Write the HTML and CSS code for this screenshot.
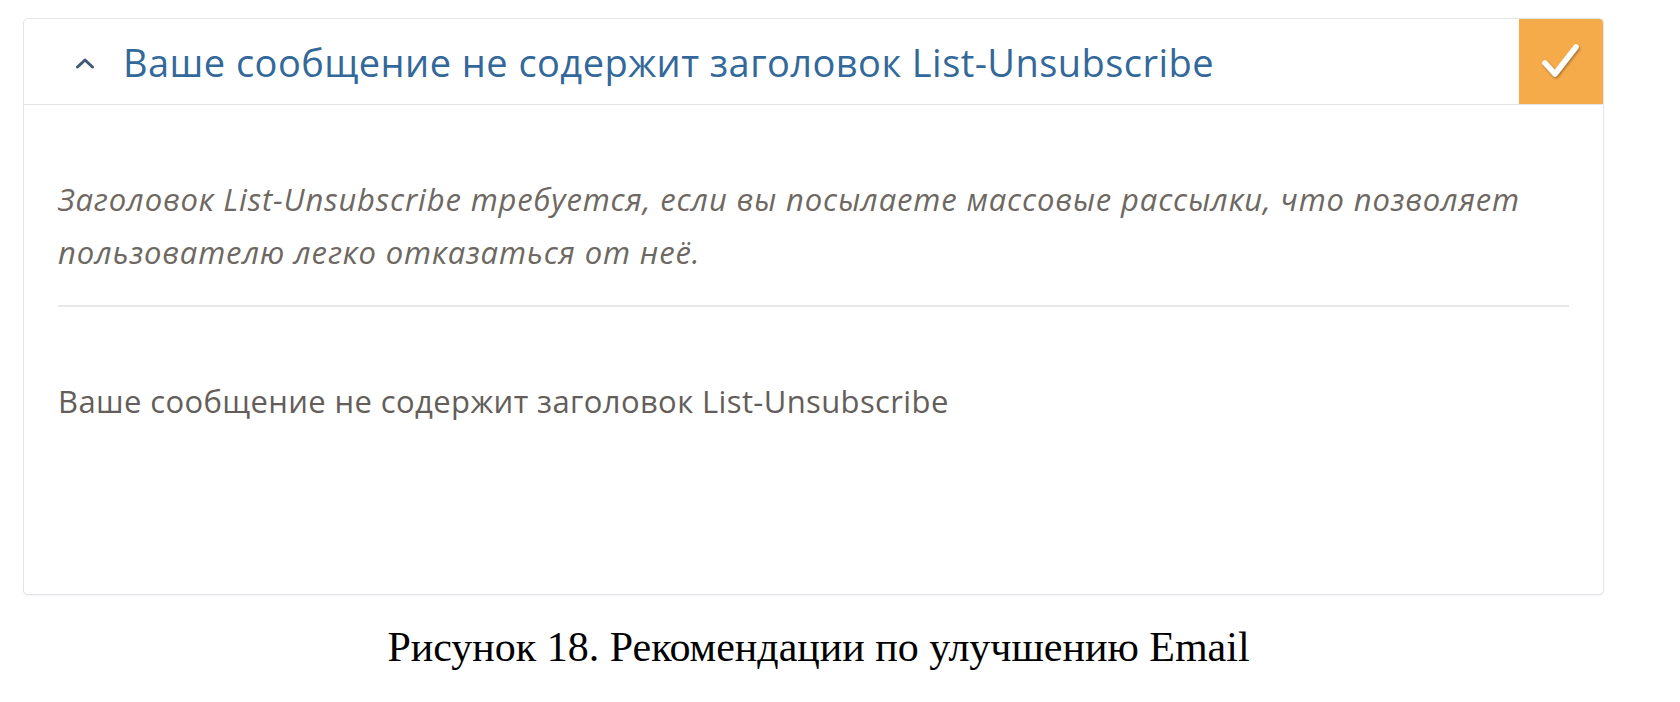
FILE: index.html
```html
<!DOCTYPE html>
<html lang="ru">
<head>
<meta charset="utf-8">
<title>Рекомендации по улучшению Email</title>
<link rel="stylesheet" href="styles.css">
</head>
<body>
<div class="page">
  <section class="card">
    <header class="card-header">
      <span class="chevron">
        <svg width="20" height="12" viewBox="0 0 20 12"><path d="M2.5 10 L10 3 L17.5 10" fill="none" stroke="#3f5a76" stroke-width="3" stroke-linecap="round" stroke-linejoin="round"/></svg>
      </span>
      <h2 class="card-title">Ваше сообщение не содержит заголовок List-Unsubscribe</h2>
      <span class="status">
        <svg width="44" height="44" viewBox="0 0 44 44">
          <defs>
            <filter id="sh" x="-30%" y="-30%" width="160%" height="160%">
              <feDropShadow dx="1" dy="1.5" stdDeviation="0.8" flood-color="#5a3a10" flood-opacity="0.55"/>
            </filter>
          </defs>
          <path d="M6 23 L16 34 L37 7" fill="none" stroke="#ffffff" stroke-width="5.5" stroke-linecap="round" stroke-linejoin="round" filter="url(#sh)"/>
        </svg>
      </span>
    </header>
    <div class="card-body">
      <p class="hint">Заголовок List-Unsubscribe требуется, если вы посылаете массовые рассылки, что позволяет пользователю легко отказаться от неё.</p>
      <hr class="divider">
      <p class="result">Ваше сообщение не содержит заголовок List-Unsubscribe</p>
    </div>
  </section>
  <p class="caption">Рисунок 18. Рекомендации по улучшению Email</p>
</div>
</body>
</html>
```
FILE: styles.css
```css
* { box-sizing: border-box; }
html, body { margin: 0; padding: 0; background: #ffffff; }
body { font-family: "Open Sans", "Noto Sans", sans-serif; }

.page {
  padding: 18px 0 0 23px;
}

.card {
  width: 1581px;
  height: 577px;
  border: 1px solid #e2e5e9;
  border-radius: 5px;
  box-shadow: 0 1px 2px rgba(0,0,0,0.05);
  background: #fff;
  overflow: hidden;
}

.card-header {
  display: flex;
  align-items: center;
  height: 86px;
  border-bottom: 1px solid #e3e6ea;
}

.chevron {
  display: flex;
  margin-left: 51px;
  margin-right: 28px;
  margin-top: 2px;
}

.card-title {
  margin: 0;
  font-weight: 400;
  font-size: 38px;
  letter-spacing: 0.45px;
  color: #33689a;
  flex: 1;
  white-space: nowrap;
}

.status {
  width: 84px;
  height: 85px;
  background: #f6ab4b;
  display: flex;
  align-items: center;
  justify-content: center;
  align-self: flex-start;
}

.card-body {
  padding: 68px 34px 0 34px;
}

.hint {
  margin: 0;
  font-style: italic;
  font-size: 31px;
  letter-spacing: 0.85px;
  line-height: 53px;
  color: #6d6862;
  max-width: 1511px;
}

.divider {
  border: 0;
  border-top: 2px solid #e6e8ec;
  margin: 26px 0 67px 0;
  width: 1511px;
}

.result {
  margin: 0;
  font-size: 31px;
  letter-spacing: 0.38px;
  line-height: 54px;
  color: #635e59;
}

.caption {
  margin: 28px 0 0 0;
  padding-left: 10px;
  width: 1581px;
  text-align: center;
  font-family: "Liberation Serif", "Times New Roman", serif;
  font-size: 42px;
  color: #000;
}
```
